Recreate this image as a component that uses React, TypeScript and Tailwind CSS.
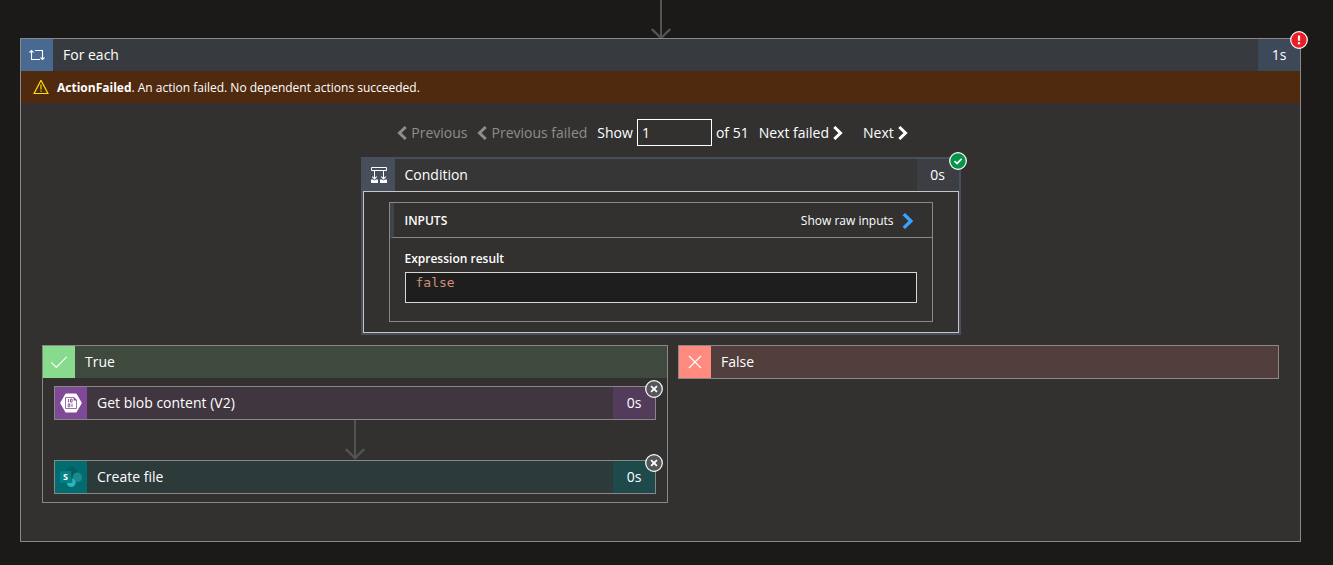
import { useId, useState, type ReactNode } from 'react';

type Tone = 'loop' | 'true' | 'false' | 'blob' | 'sharepoint' | 'condition';

const tones: Record<Tone, { bar: string; icon: string; time: string }> = {
  loop: { bar: 'bg-[#373a3e]', icon: 'bg-[#486991]', time: 'bg-[#3d4858]' },
  true: { bar: 'bg-[#3f493d]', icon: 'bg-[#88da8d]', time: '' },
  false: { bar: 'bg-[#523e3c]', icon: 'bg-[#ff8a80]', time: '' },
  blob: { bar: 'bg-[#403640]', icon: 'bg-[#804998]', time: 'bg-[#533b5c]' },
  sharepoint: { bar: 'bg-[#2d3a3a]', icon: 'bg-[#036c70]', time: 'bg-[#1f4a4b]' },
  condition: { bar: 'bg-[#363636]', icon: 'bg-[#464f5b]', time: 'bg-[#3c3e43]' },
};

function TitleBar({ tone, icon, title, time }: { tone: Tone; icon: ReactNode; title: string; time?: string }) {
  const t = tones[tone];
  return (
    <div className={`flex h-8 items-stretch ${t.bar}`}>
      <span className={`flex w-8 shrink-0 items-center justify-center ${t.icon}`}>{icon}</span>
      <span className="flex-1 self-center pl-2.5 text-sm leading-5">{title}</span>
      {time && (
        <span className={`flex w-[42px] items-center justify-center text-sm leading-5 ${t.time}`}>{time}</span>
      )}
    </div>
  );
}

function StatusBadge({ kind }: { kind: 'failed' | 'succeeded' | 'skipped' }) {
  const fill = { failed: '#e81f27', succeeded: '#079448', skipped: '#54585a' }[kind];
  return (
    <svg
      role="img"
      aria-label={kind}
      viewBox="0 0 18 18"
      className={`absolute -right-2 size-[18px] ${kind === 'failed' ? '-top-2' : '-top-[7px]'}`}
      fill="none"
      stroke="#fff"
    >
      <circle cx="9" cy="9" r="8.3" fill={fill} strokeWidth="1.2" />
      {kind === 'failed' && <path d="M9 4.6v5.2M9 11.3v2" strokeWidth="2.2" />}
      {kind === 'succeeded' && <path d="M5.5 9.2 8 11.5 12.6 6.8" strokeWidth="1.7" />}
      {kind === 'skipped' && <path d="m6.1 6.1 5.8 5.8M11.9 6.1l-5.8 5.8" strokeWidth="1.8" />}
    </svg>
  );
}

function Chevron({ dir, className }: { dir: 'left' | 'right'; className: string }) {
  return (
    <svg viewBox="0 0 10 14" className={className} fill="none" stroke="currentColor" strokeWidth="3" aria-hidden="true">
      <path d={dir === 'left' ? 'M8.7 1 2.5 7l6.2 6' : 'M1.3 1l6.2 6-6.2 6'} />
    </svg>
  );
}

function FlowArrow() {
  return (
    <svg viewBox="0 0 20 40" className="mx-auto block h-10 w-5" fill="none" stroke="#545353" strokeWidth="2" aria-hidden="true">
      <path d="M10 0v38" />
      <path d="m.8 29 9.2 9 9.2-9" strokeWidth="2.4" />
    </svg>
  );
}

function LoopIcon() {
  return (
    <svg viewBox="0 0 16 12" className="h-3 w-4" fill="none" stroke="#fff" strokeWidth="1.1" aria-hidden="true">
      <path d="M6 1.5h7.5v9M11.5 8.5l2 2 2-2M11 10.5H2.5v-9M.5 3.5l2-2 2 2" />
    </svg>
  );
}

function ConditionIcon() {
  return (
    <svg viewBox="0 0 16 16" className="size-4" fill="none" stroke="#fff" aria-hidden="true">
      <path d="M.5.5h15v3H.5z" />
      <path d="M3.5 4v7.5M12.5 4v7.5" />
      <path d="M1.3 9.6l2.2 2.2 2.2-2.2M10.3 9.6l2.2 2.2 2.2-2.2" strokeWidth="1.2" />
      <path d="M0 12.5h2l1.500 1L5 12.5h2V16H0zM9 12.5h2l1.500 1 1.500-1h2V16H9z" fill="#fff" stroke="none" />
    </svg>
  );
}

function BlobIcon() {
  return (
    <svg viewBox="0 0 22 20" className="h-5 w-[22px]" aria-hidden="true">
      <path d="M6.2.4h9.6q.6 0 .9.5l4.9 8.6q.3.5 0 1l-4.9 8.6q-.3.5-.9.5H6.2q-.6 0-.9-.5L.4 10.5q-.3-.5 0-1L5.3.9q.3-.5.9-.5z" fill="#fff" />
      <path d="M5.5 4.5H14L16.5 7v8.500h-11z" fill="#fff" stroke="#9a70ad" />
      <path d="M13.6 4v3.400H17z" fill="#804998" />
      <path
        d="M8.5 6v3.300M10.5 6.200h1.600v2.900h-1.600zM8.200 10.900h1.600v2.900H8.200zM12 10.700v3.300"
        fill="none"
        stroke="#804998"
        strokeWidth=".9"
      />
    </svg>
  );
}

function SharePointIcon() {
  return (
    <svg viewBox="0 0 24 24" className="size-6" aria-hidden="true">
      <circle cx="12.3" cy="7.2" r="5.9" fill="#045f63" />
      <circle cx="18.4" cy="12.3" r="4.8" fill="#1a8a8f" />
      <circle cx="12.2" cy="17.7" r="4.4" fill="#2db4bd" />
      <path d="M6 7h7.3v11H6z" fill="#034c4f" opacity=".6" />
      <rect x="1" y="6" width="11.3" height="11.8" rx="1" fill="#038387" />
      <text x="6.6" y="15" textAnchor="middle" fontSize="9" fontWeight="700" fill="#fff">S</text>
    </svg>
  );
}

function ActionCard({ tone, icon, title }: { tone: Tone; icon: ReactNode; title: string }) {
  return (
    <article className="relative border border-[#8a8886]">
      <TitleBar tone={tone} icon={icon} title={title} time="0s" />
      <StatusBadge kind="skipped" />
    </article>
  );
}

function Pager() {
  const id = useId();
  const [page, setPage] = useState('1');
  return (
    <nav aria-label="Iterations" className="flex items-center justify-center pr-4 text-sm leading-5">
      <button type="button" disabled className="flex items-center gap-1 text-[#8f8d8b]">
        <Chevron dir="left" className="h-3.5 w-2.5" />
        Previous
      </button>
      <button type="button" disabled className="ml-2.5 flex items-center gap-1 text-[#8f8d8b]">
        <Chevron dir="left" className="h-3.5 w-2.5" />
        Previous failed
      </button>
      <label htmlFor={id} className="ml-2.5">Show</label>
      <input
        id={id}
        value={page}
        onChange={(e) => setPage(e.target.value)}
        className="mx-1 h-[27px] w-[75px] border border-white bg-transparent px-1"
      />
      <span>of 51</span>
      <button type="button" className="ml-2.5 flex items-center gap-1">
        Next failed
        <Chevron dir="right" className="h-3.5 w-2.5" />
      </button>
      <button type="button" className="ml-5 flex items-center gap-1">
        Next
        <Chevron dir="right" className="h-3.5 w-2.5" />
      </button>
    </nav>
  );
}

function ConditionCard() {
  return (
    <article className="relative mx-auto mt-[11px] max-w-[600px] border-2 border-[#464f5b]">
      <TitleBar tone="condition" icon={<ConditionIcon />} title="Condition" time="0s" />
      <StatusBadge kind="succeeded" />
      <div className="border border-[#c8c6c4] px-[25px] py-2.5">
        <section className="border border-[#8a8886]">
          <header className="flex h-[35px] items-center border-b border-l-4 border-b-[#8a8886] border-l-[#41434c] pt-0.5 pr-[18px] pl-[11px] text-xs leading-4">
            <h3 className="flex-1 font-semibold">INPUTS</h3>
            <button type="button" className="flex items-center gap-2">
              Show raw inputs
              <Chevron dir="right" className="h-4 w-3 text-[#3aa0ff]" />
            </button>
          </header>
          <div className="px-[15px] pt-[13px] pb-[18px]">
            <h4 className="text-xs leading-4 font-semibold">Expression result</h4>
            <pre className="mt-[5px] h-[31px] border border-[#d8d6d4] bg-[#1e1e1e] px-2.5 font-['DejaVu_Sans_Mono',monospace] text-[13px] leading-5 text-[#ce9178]">
              false
            </pre>
          </div>
        </section>
      </div>
    </article>
  );
}

export default function App() {
  return (
    <main className="min-h-screen bg-[#1b1a19] pr-8 pb-6 pl-5 font-['Open_Sans','Noto_Sans',sans-serif] text-white">
      <div className="h-[38px] overflow-hidden">
        <FlowArrow />
      </div>
      <section className="relative border border-[#8a8886] bg-[#323130]">
        <TitleBar tone="loop" icon={<LoopIcon />} title="For each" time="1s" />
        <StatusBadge kind="failed" />
        <p role="alert" className="flex h-8 items-center bg-[#4f2a0f] pt-0.5 pl-3 text-xs leading-4">
          <svg viewBox="0 0 16 16" className="mr-2 size-4" fill="none" stroke="#fce100" aria-hidden="true">
            <path d="M8 .3 14.9 13.5H1.1zM8 4.5v5M8 10.5v1.3" strokeWidth="1.2" />
          </svg>
          <span>
            <strong className="font-bold">ActionFailed</strong>. An action failed. No dependent actions succeeded.
          </span>
        </p>
        <div className="px-[21px] pt-4 pb-[38px]">
          <Pager />
          <ConditionCard />
          <div className="mt-2.5 grid grid-cols-[626fr_601fr] items-start gap-2.5">
            <section className="border border-[#8a8886]">
              <TitleBar
                tone="true"
                title="True"
                icon={
                  <svg viewBox="0 0 16 16" className="size-4" fill="none" stroke="#fff" strokeWidth="1.2" aria-hidden="true">
                    <path d="m.3 8.3 5 5L15.7 2.8" />
                  </svg>
                }
              />
              <div className="px-[11px] py-2">
                <ActionCard tone="blob" icon={<BlobIcon />} title="Get blob content (V2)" />
                <FlowArrow />
                <ActionCard tone="sharepoint" icon={<SharePointIcon />} title="Create file" />
              </div>
            </section>
            <section className="border border-[#8a8886]">
              <TitleBar
                tone="false"
                title="False"
                icon={
                  <svg viewBox="0 0 16 16" className="size-4" fill="none" stroke="#fff" strokeWidth="1.1" aria-hidden="true">
                    <path d="m2 2 12 12M14 2 2 14" />
                  </svg>
                }
              />
            </section>
          </div>
        </div>
      </section>
    </main>
  );
}
